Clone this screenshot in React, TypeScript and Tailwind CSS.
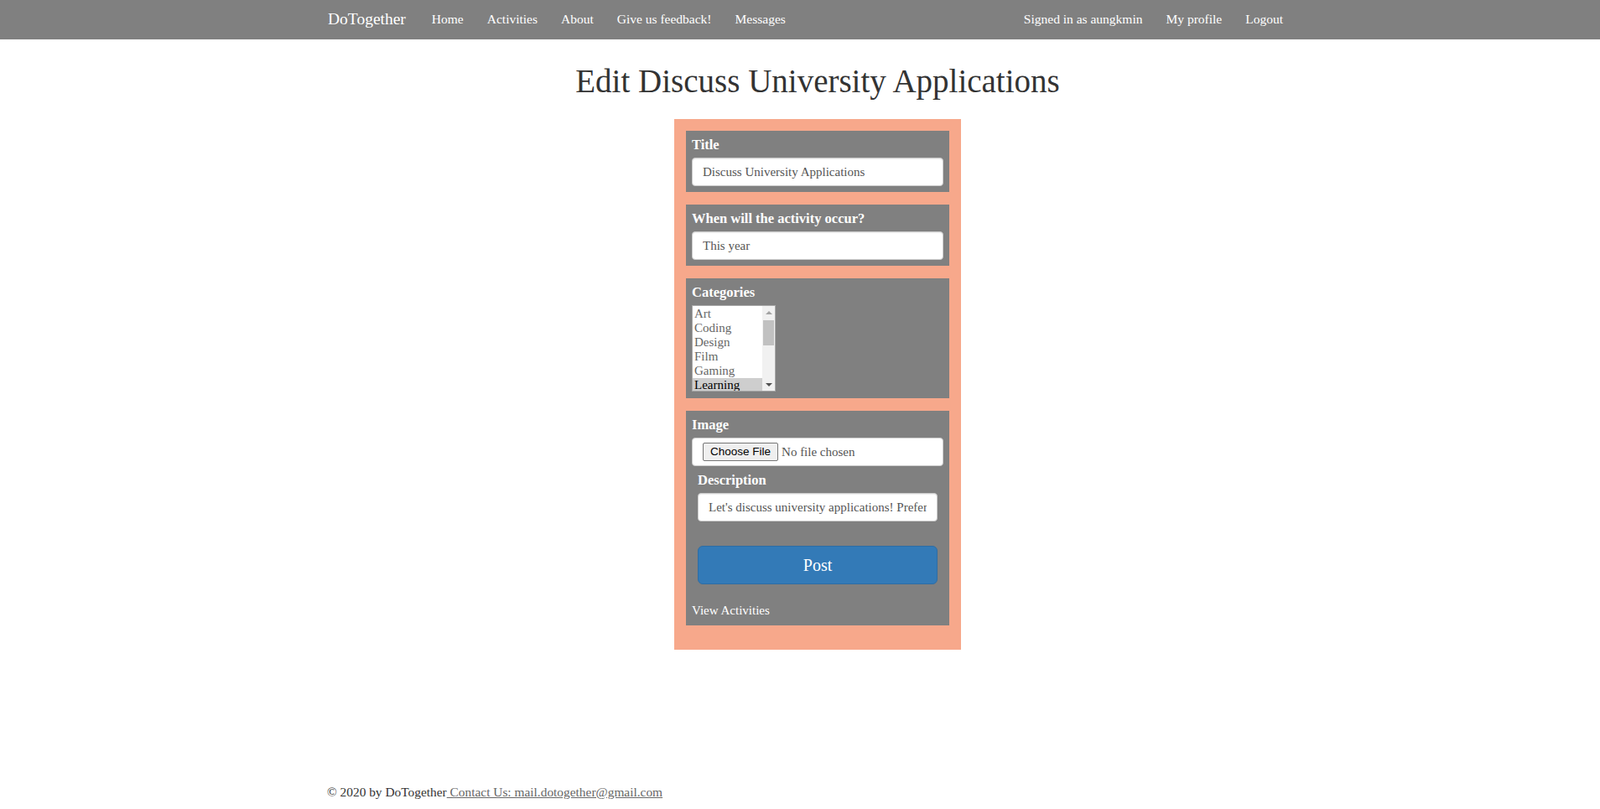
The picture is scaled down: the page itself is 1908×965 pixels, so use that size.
import React from 'react';

const serif = "font-['Liberation_Serif',serif]";

const NavBar = () => {
  const left = ['Home', 'Activities', 'About', 'Give us feedback!', 'Messages'];
  const right = ['Signed in as aungkmin', 'My profile', 'Logout'];
  return (
    <nav className="h-[47px] bg-[#808080] text-white">
      <div className="w-[1170px] mx-auto h-full pl-[22px] pr-[9px] pb-[2px] flex items-center justify-between">
        <div className="flex items-center">
          <a href="#" className="text-[19.5px] leading-[22px] mr-[31px]">DoTogether</a>
          <ul className="flex items-center gap-[28px] text-[15.5px] leading-[20px]">
            {left.map(item => (
              <li key={item}><a href="#">{item}</a></li>
            ))}
          </ul>
        </div>
        <ul className="flex items-center gap-[28px] text-[15.5px] leading-[20px]">
          {right.map(item => (
            <li key={item}><a href="#">{item}</a></li>
          ))}
        </ul>
      </div>
    </nav>
  );
};

const Label = ({ children }: { children: React.ReactNode }) => (
  <label className="block text-white font-bold text-[16.5px] leading-[20px] mb-[5px]">{children}</label>
);

const TextInput = ({ value }: { value: string }) => (
  <input
    readOnly
    defaultValue={value}
    className={`${serif} block w-full h-[34px] px-[12px] bg-white border border-[#ccc] rounded-[4px] text-[15px] text-[#555] outline-none shadow-[inset_0_1px_1px_rgba(0,0,0,0.075)]`}
  />
);

const CategoryList = () => {
  const options = ['Art', 'Coding', 'Design', 'Film', 'Gaming', 'Learning'];
  return (
    <div className="flex w-[100px] h-[103px] bg-white border border-[#a9a9a9] overflow-hidden">
      <ul className="flex-1 pt-px text-[15px] leading-[17px]">
        {options.map(o => (
          <li
            key={o}
            className={o === 'Learning' ? 'pl-[2px] bg-[#cecece] text-black' : 'pl-[2px] text-[#666]'}
          >
            {o}
          </li>
        ))}
      </ul>
      <div className="w-[15px] bg-[#f1f1f1] flex flex-col items-center">
        <div className="h-[15px] flex items-center justify-center">
          <div className="w-0 h-0 border-l-[4px] border-r-[4px] border-b-[4px] border-l-transparent border-r-transparent border-b-[#a3a3a3]" />
        </div>
        <div className="w-[13px] h-[30px] mt-[2px] bg-[#c1c1c1]" />
        <div className="flex-1" />
        <div className="h-[15px] flex items-center justify-center">
          <div className="w-0 h-0 border-l-[4px] border-r-[4px] border-t-[4px] border-l-transparent border-r-transparent border-t-[#505050]" />
        </div>
      </div>
    </div>
  );
};

const FileField = () => (
  <div className="flex items-center h-[34px] px-[12px] bg-white border border-[#ccc] rounded-[4px]">
    <span className="font-['Liberation_Sans',sans-serif] text-[13.5px] leading-[20px] text-black bg-[#efefef] border border-[#767676] rounded-[2px] px-[8px] h-[22px] flex items-center">
      Choose File
    </span>
    <span className="ml-[4px] text-[15px] text-[#555]">No file chosen</span>
  </div>
);

const Section = ({ children, className = '' }: { children: React.ReactNode; className?: string }) => (
  <div className={`bg-[#808080] px-[7px] pt-[7px] mb-[15px] ${className}`}>{children}</div>
);

export default function App() {
  return (
    <div className={`${serif} min-h-screen flex flex-col bg-white text-[#333]`}>
      <NavBar />

      <main className="w-[1170px] mx-auto pl-[42px] flex flex-col items-center">
        <h1 className="mt-[28px] mb-[24px] text-[39px] leading-[43px] font-normal text-[#333]">
          Edit Discuss University Applications
        </h1>

        <form className="w-[342px] bg-[#f7a88b] px-[14px] pt-[14px] pb-[14px]">
          <Section className="pb-[7px]">
            <Label>Title</Label>
            <TextInput value="Discuss University Applications" />
          </Section>

          <Section className="pb-[7px]">
            <Label>When will the activity occur?</Label>
            <TextInput value="This year" />
          </Section>

          <Section className="pb-[8px]">
            <Label>Categories</Label>
            <CategoryList />
          </Section>

          <Section className="pb-[8px]">
            <Label>Image</Label>
            <FileField />
            <div className="px-[7px] pt-[7px]">
              <Label>Description</Label>
              <TextInput value="Let's discuss university applications! Preferably with people applying this year." />
              <button
                type="button"
                className="mt-[29px] w-full h-[46px] bg-[#337ab7] border border-[#2e6da4] rounded-[6px] text-white text-[20px]"
              >
                Post
              </button>
            </div>
            <a href="#" className="block mt-[21px] text-white text-[15px] leading-[20px]">View Activities</a>
          </Section>
        </form>
      </main>

      <footer className="mt-auto w-[1170px] mx-auto pl-[21px] pb-[10px] text-[15.4px] leading-[20px] text-[#333]">
        © 2020 by DoTogether
        <a href="#" className="underline text-[#666]"> Contact Us: mail.dotogether@gmail.com</a>
      </footer>
    </div>
  );
}
